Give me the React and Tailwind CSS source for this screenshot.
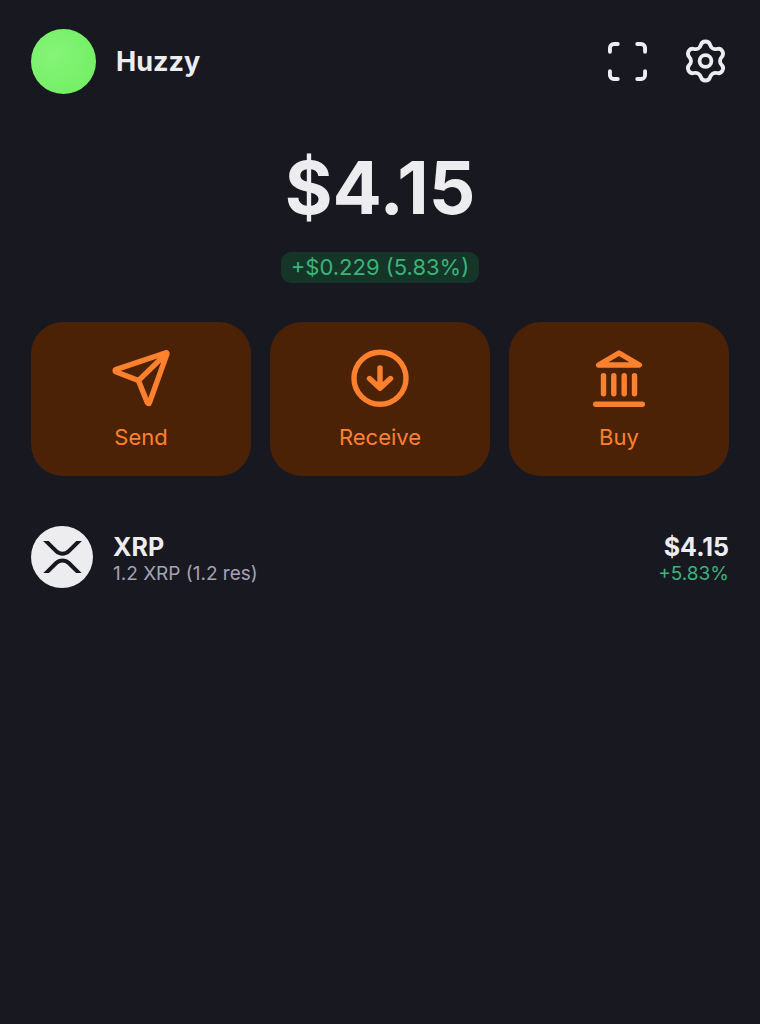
const iconProps = {
  viewBox: "0 0 60 60",
  fill: "none",
  stroke: "currentColor",
  strokeWidth: 5.4,
  strokeLinecap: "round",
  strokeLinejoin: "round",
  className: "size-15",
  "aria-hidden": true,
};

function SendIcon() {
  return (
    <svg {...iconProps}>
      <path d="M55 3.7 4.8 20.6c-1 .4-1 1.7 0 2.1L27.4 31.6l9 22.2c.4 1 1.8 1 2.1-.1L56 4.8c.2-.7-.3-1.3-1-1.1ZM27.4 31.6 55.2 4.6" />
    </svg>
  );
}

function ReceiveIcon() {
  return (
    <svg {...iconProps}>
      <circle cx="30" cy="29.3" r="26" />
      <path d="M30 19v20M19.5 29.5 30 39.2l10.5-9.7" />
    </svg>
  );
}

function BankIcon() {
  return (
    <svg {...iconProps}>
      <path d="M9.6 16 30 4 50.4 16ZM14.5 26.8v18M24.8 26.8v18M35.2 26.8v18M45.5 26.8v18M6.7 55.3h46.6" />
    </svg>
  );
}

function ScanIcon() {
  return (
    <svg
      viewBox="0 0 40 40"
      fill="none"
      stroke="currentColor"
      strokeWidth="4"
      strokeLinecap="round"
      strokeLinejoin="round"
      className="size-[39px]"
      aria-hidden="true"
    >
      <path d="M2 10V6a4 4 0 0 1 4-4h4M30 2h4a4 4 0 0 1 4 4v4M38 30v4a4 4 0 0 1-4 4h-4M10 38H6a4 4 0 0 1-4-4v-4" />
    </svg>
  );
}

function GearIcon() {
  return (
    <svg
      viewBox="-23.5 -23 47 47"
      fill="none"
      stroke="currentColor"
      strokeWidth="3.8"
      strokeLinejoin="round"
      className="size-[47px]"
      aria-hidden="true"
    >
      <path d="M-4.64-15.95A4.8 4.8 0 0 1 4.64-15.95A5.6 5.6 0 0 0 11.49-11.99A4.8 4.8 0 0 1 16.13-3.96A5.6 5.6 0 0 0 16.13 3.96A4.8 4.8 0 0 1 11.49 11.99A5.6 5.6 0 0 0 4.64 15.95A4.8 4.8 0 0 1-4.64 15.95A5.6 5.6 0 0 0-11.49 11.99A4.8 4.8 0 0 1-16.13 3.96A5.6 5.6 0 0 0-16.13-3.96A4.8 4.8 0 0 1-11.49-11.99A5.6 5.6 0 0 0-4.64-15.95Z" />
      <circle r="5.9" />
    </svg>
  );
}

function XrpMark() {
  return (
    <svg viewBox="0 0 512 424" fill="currentColor" className="w-[39px]" aria-hidden="true">
      <path d="M437 0h74L357 152.48c-55.77 55.19-146.19 55.19-202 0L.94 0H75l117 115.83a91.11 91.11 0 0 0 127.91 0Z" />
      <path d="M74.05 424H0l155-153.42c55.77-55.19 146.19-55.19 202 0L512 424h-74L320 307.23a91.11 91.11 0 0 0-127.91 0Z" />
    </svg>
  );
}

const actions = [
  { label: "Send", Icon: SendIcon },
  { label: "Receive", Icon: ReceiveIcon },
  { label: "Buy", Icon: BankIcon },
];

export default function App() {
  return (
    <div className="min-h-screen bg-[#181821] px-[31px] pt-[29px] font-['Inter',sans-serif] text-[#ededf0]">
      <header className="flex items-center justify-between">
        <button type="button" className="flex items-center gap-5">
          <span className="size-[65px] rounded-full bg-radial-[at_35%_40%] from-[#85f478] to-[#6fee5f]" />
          <span className="text-[27px] leading-8 font-bold">Huzzy</span>
        </button>
        <div className="flex items-center gap-[35px]">
          <button type="button" aria-label="Scan">
            <ScanIcon />
          </button>
          <button type="button" aria-label="Settings">
            <GearIcon />
          </button>
        </div>
      </header>

      <main>
        <section className="flex flex-col items-center pt-[50px]">
          <h1 className="text-[73px] leading-[88px] font-bold">$4.15</h1>
          <p className="mt-5 rounded-[10px] bg-[#143527] px-[10px] text-[22px] leading-[31px] text-[#3bb37a]">
            +$0.229 (5.83%)
          </p>
        </section>

        <section className="mt-[39px] grid grid-cols-3 gap-[19px]">
          {actions.map(({ label, Icon }) => (
            <button
              key={label}
              type="button"
              className="flex flex-col items-center rounded-[32px] bg-[#4b2206] pt-[27px] pb-[25px] text-[22px] leading-7 text-[#ff812e]"
            >
              <Icon />
              <span className="mt-[14px]">{label}</span>
            </button>
          ))}
        </section>

        <ul className="mt-[50px]">
          <li className="flex items-center justify-between">
            <div className="flex items-center gap-5">
              <span className="flex size-[62px] items-center justify-center rounded-full bg-[#ededf0] text-[#181821]">
                <XrpMark />
              </span>
              <div className="pt-1">
                <p className="text-[25px] leading-[30px] font-bold">XRP</p>
                <p className="text-[19px] leading-6 text-[#a5a2b5]">1.2 XRP (1.2 res)</p>
              </div>
            </div>
            <div className="pt-1 text-right">
              <p className="text-[25px] leading-[30px] font-bold">$4.15</p>
              <p className="text-[19px] leading-6 text-[#3bb37a]">+5.83%</p>
            </div>
          </li>
        </ul>
      </main>
    </div>
  );
}
